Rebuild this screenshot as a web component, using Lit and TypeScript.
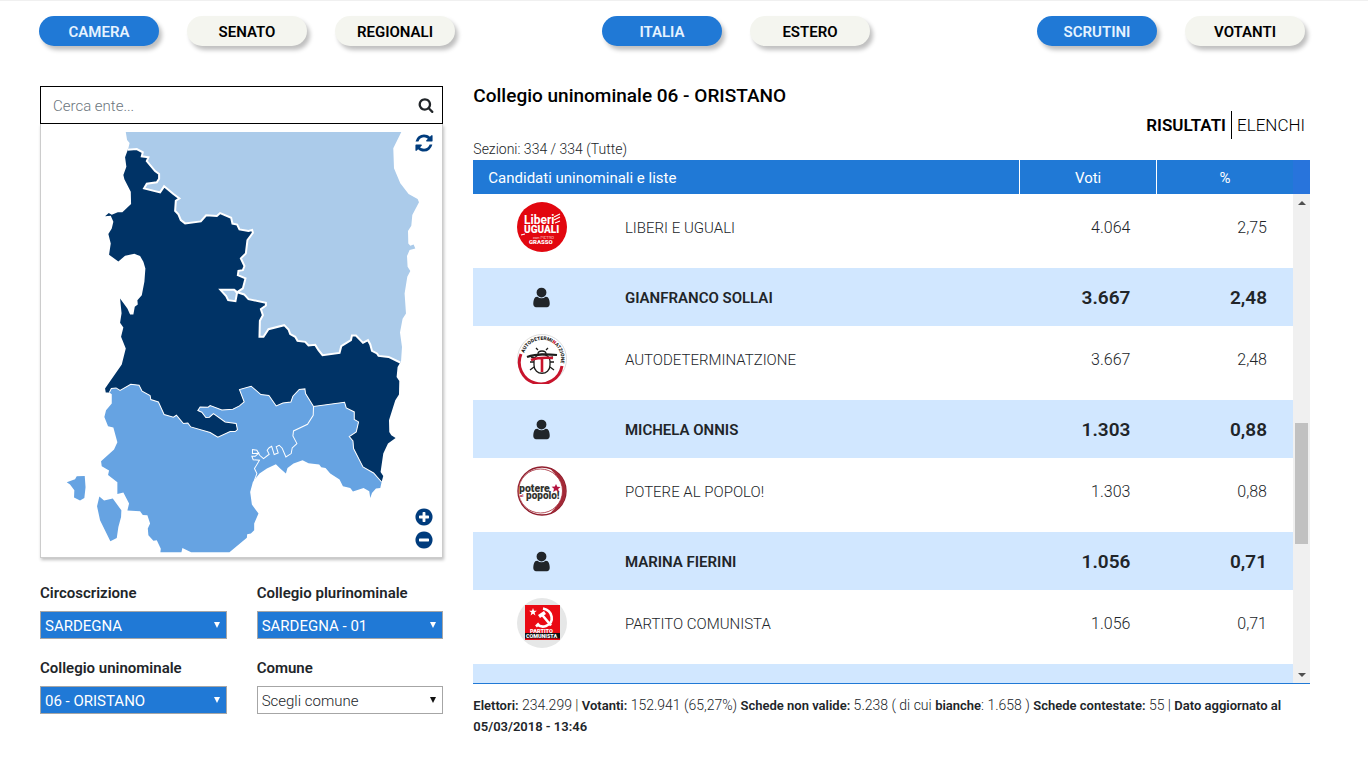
import { LitElement, html, svg, css } from "lit";
import { customElement, property } from "lit/decorators.js";
import { classMap } from "lit/directives/class-map.js";

type Row =
  | { kind: "candidate"; name: string; votes: string; share: string }
  | { kind: "list"; logo: string; name: string; votes: string; share: string }
  | { kind: "spacer" };

const ROWS: Row[] = [
  { kind: "list", logo: "leu", name: "LIBERI E UGUALI", votes: "4.064", share: "2,75" },
  { kind: "candidate", name: "GIANFRANCO SOLLAI", votes: "3.667", share: "2,48" },
  { kind: "list", logo: "auto", name: "AUTODETERMINATZIONE", votes: "3.667", share: "2,48" },
  { kind: "candidate", name: "MICHELA ONNIS", votes: "1.303", share: "0,88" },
  { kind: "list", logo: "pap", name: "POTERE AL POPOLO!", votes: "1.303", share: "0,88" },
  { kind: "candidate", name: "MARINA FIERINI", votes: "1.056", share: "0,71" },
  { kind: "list", logo: "pc", name: "PARTITO COMUNISTA", votes: "1.056", share: "0,71" },
  { kind: "spacer" },
];

const NAV = [
  [{ label: "CAMERA", on: true }, { label: "SENATO", on: false }, { label: "REGIONALI", on: false }],
  [{ label: "ITALIA", on: true }, { label: "ESTERO", on: false }],
  [{ label: "SCRUTINI", on: true }, { label: "VOTANTI", on: false }],
];

const FILTERS = [
  { id: "circ", label: "Circoscrizione", value: "SARDEGNA", on: true },
  { id: "pluri", label: "Collegio plurinominale", value: "SARDEGNA - 01", on: true },
  { id: "uni", label: "Collegio uninominale", value: "06 - ORISTANO", on: true },
  { id: "comune", label: "Comune", value: "Scegli comune", on: false },
];

const ICONS: Record<string, string> = {
  user: "M1536 1399q0 109-62.5 187t-150.5 78h-854q-88 0-150.5-78t-62.5-187q0-85 8.5-160.5t31.5-152 58.5-131 94-89 134.5-34.5q131 128 313 128t313-128q76 0 134.5 34.5t94 89 58.5 131 31.5 152 8.5 160.5zm-256-887q0 159-112.5 271.5t-271.5 112.5-271.5-112.5-112.5-271.5 112.5-271.5 271.5-112.5 271.5 112.5 112.5 271.5z",
  search: "M1216 832q0-185-131.5-316.5t-316.5-131.5-316.5 131.5-131.5 316.5 131.5 316.5 316.5 131.5 316.5-131.5 131.5-316.5zm512 832q0 52-38 90t-90 38q-54 0-90-38l-343-342q-179 124-399 124-143 0-273.5-55.5t-225-150-150-225-55.5-273.5 55.5-273.5 150-225 225-150 273.5-55.5 273.5 55.5 225 150 150 225 55.5 273.5q0 220-124 399l343 343q37 37 37 90z",
  refresh: "M1639 1056q0 5-1 7-64 268-268 434.5t-478 166.5q-146 0-282.5-55t-243.5-157l-129 129q-19 19-45 19t-45-19-19-45v-448q0-26 19-45t45-19h448q26 0 45 19t19 45-19 45l-137 137q71 66 161 102t187 36q134 0 250-65t186-179q11-17 53-117 8-23 30-23h192q13 0 22.5 9.5t9.5 22.5zm25-800v448q0 26-19 45t-45 19h-448q-26 0-45-19t-19-45 19-45l138-138q-148-137-349-137-134 0-250 65t-186 179q-11 17-53 117-8 23-30 23h-199q-13 0-22.5-9.5t-9.5-22.5v-7q65-268 270-434.5t480-166.5q146 0 284 55.5t245 156.5l130-129q19-19 45-19t45 19 19 45z",
  plus: "M1344 960v-128q0-26-19-45t-45-19h-256v-256q0-26-19-45t-45-19h-128q-26 0-45 19t-19 45v256h-256q-26 0-45 19t-19 45v128q0 26 19 45t45 19h256v256q0 26 19 45t45 19h128q26 0 45-19t19-45v-256h256q26 0 45-19t19-45zm320-64q0 209-103 385.5t-279.5 279.5-385.5 103-385.5-103-279.5-279.5-103-385.5 103-385.5 279.5-279.5 385.5-103 385.5 103 279.5 279.5 103 385.5z",
  minus: "M1344 960v-128q0-26-19-45t-45-19h-768q-26 0-45 19t-19 45v128q0 26 19 45t45 19h768q26 0 45-19t19-45zm320-64q0 209-103 385.5t-279.5 279.5-385.5 103-385.5-103-279.5-279.5-103-385.5 103-385.5 279.5-279.5 385.5-103 385.5 103 279.5 279.5 103 385.5z",
};

const icon = (name: string, size: number) => html`
  <svg width=${size} height=${size} viewBox="0 0 1792 1792" fill="currentColor" aria-hidden="true">
    <path d=${ICONS[name]}></path>
  </svg>`;

/* Borders shared between neighbouring districts */
const NORTH_LINE =
  "127.3 149.7 136.7 149 142.7 152.3 141.7 156.3 148.3 157.3 146.7 161 155 171 159 174 159 178.7 156.7 182.3 146.7 183.7 144 188.3 160 192.3 164 186.3 173.3 194 179.3 198.3 175.7 200.7 175 210.7 178.3 214.3 180.7 220 185 223.3 200.7 221.3 206 215.3 216.7 216 220 213 231 217.7 232.3 223.5 237 224.5 239.3 229.3 248.3 231 252 230 252.7 232.7 247.3 240 245.7 253.3 240.7 258.3 244.3 266 242.7 270 238.3 270.7 237.7 275 245.3 278.3 242.7 288.3 237 292 244 294.3 248.3 299 265.7 302.7 265.7 305.3 260.7 309 262.7 315 259.7 320.7 259.3 336.7 263.3 336.7 268.3 329 284 325 288.3 329.3 290 334 295 336.7 297.3 340.7 305 341.7 308.3 345.3 315 344.7 318.3 350 322.3 355 339.3 352.7 341 346 350.7 340 351.7 335.3 355.7 335.3 362.7 342.7 367.7 340 370 344.3 371.7 350.7 376.7 353.3 378.3 355.7 388.3 356.7 400 362.3";
const EAST_COAST =
  "397.3 366.7 396.3 376.7 399 380.7 398.7 394.3 395 400 388.7 420 389 431.7 391 435 395.3 437.7 387.7 443.3 383 453.3 380.3 471.7 383 475.7 381.3 481.7";
const SOUTH_LINE =
  "381.3 481.7 373.3 472.7 362.7 466.7 353.3 448.3 352.7 440.7 349 436.3 356 431.7 358.3 421.7 354 419.3 354 411.7 346 407.7 344.3 402 313.3 406.3 305.3 393.3 304.7 388.7 299 389.3 292.7 396 290.7 401.7 282.7 402.7 276 405.7 268.7 395.3 260.7 394.3 251 386 239.3 389.3 244 401.7 239.3 405.7 232.7 409 221.7 409.7 210 405.3 208 407 200 406.7 197.7 410.3 201.7 412 205.7 417.3 209.3 417 213.3 413.3 225 421.7 236 423.3 237.3 429.3 235 431.3 230 431.3 217.7 437 210 432.3 190.7 426.7 187.7 422.7 183.3 423.3 176.3 415 173.3 417 164 414.3 158.3 401.7 150.7 399.3 150 395.3 142 391 139 385 130.7 384 120 390.3 116 387.7 111.3 388.3 109.3 392.3";
const WEST_COAST =
  "105.7 392.3 105 388.3 121.7 364.3 125.7 348.3 121 336.7 123.3 327.3 120 322.7 121.5 313 120 298.3 127.3 308.3 130 314.3 133.3 314.3 134.7 306.7 137.7 304.3 137.3 300 141.7 295 144.3 281.7 145.3 268.3 143.3 261.7 140 256 134.3 253.7 125 255.7 118.3 261.3 109 254.7 110.7 243.3 108.3 234 111.7 228.3 113.3 221.7 110.7 215.7 105 216.3 108.7 213 111.7 214.7 117.7 212.3 122.3 212.3 131 204 130.7 191.7 124.3 179.3 123.3 175 126.3 166.7 125 157.3 127.3 151";
const NORTH_COAST =
  "400.7 361.7 401.7 346.7 399.7 332.3 402.3 318.5 405.7 313.3 404.3 293.3 407 276.7 410 271 407.3 266.7 406.7 256 409.3 250 415 248.3 413.3 244.3 410 245.7 408 243.3 407.7 231 411 225.7 412 215 418.7 202.3 417.3 199 408.3 194 400 183.3 393.7 168.3 393 148.3 401 132 125.7 132 127 140 129.5 143 128.3 148.3";
const SOUTH_COAST =
  "111.7 394 111.7 403.3 106 410 104.3 416.7 108 426 113.3 427.3 117.3 442 114 449.3 101 461 101.7 466 109 470.3 108 474.7 117.3 482 117.3 493.7 123.3 492.3 129 503.3 127.3 510.3 140 511 142.7 514.7 147.3 515 150 523.3 147.7 528.3 148.3 535 153.3 540.3 156.7 540 160.7 548.3 160.3 552 181.3 552 182.3 547.7 191 552 229.3 552 246.7 537.3 247 534 250.7 533.3 254 530 254 523.3 258.3 513.3 251.7 504.3 250 491.7 252.7 481.7 259.3 473.3 266.7 468.3 275.7 464 280 468.3 285.7 473.3 287.3 467.7 293.3 463.3 302.3 460 308.3 463 319 464.3 321 467 325.3 467.7 330 473.3 339.3 479.3 342.7 486 350 487.7 352.7 491.3 363.3 487.7 369 491 370 497.7 371.7 492.7 375.7 488.3 380 487.7";
const GULF_LINE =
  "313.3 406.3 313 415 307.3 424 293.3 430.7 292.7 435.7 296.7 443.3 292 447.7 291 453.3 285.7 456.7 282 448 279 445 276 446.5 278 452.7 274 454.3 271.5 446 269 447.5 267 450 269 454 263.3 458.3 259.5 455 256.7 450 252.3 449.3 252.3 453.3 258.3 453 255 456 251.7 456 253 459.5 259.3 460 254.3 468.3 256.7 473.3 254 480.7";

const LOGOS: Record<string, unknown> = {
  leu: svg`
    <circle cx="25" cy="25" r="25" fill="#e2070f"></circle>
    <g fill="#fff" font-family="Roboto, sans-serif">
      <text x="7" y="22" font-size="12" font-weight="700">Liberi</text>
      <text x="7" y="31" font-size="10" font-weight="900">UGUALI</text>
      <text x="16" y="37" font-size="4">con PIETRO</text>
      <text x="12" y="42" font-size="6" font-weight="900">GRASSO</text>
    </g>
    <path d="M4 33L8 32M37 15l6-3M37 18l6-3M38 21l5-2" stroke="#fff" stroke-width="1.2"></path>`,
  auto: svg`
    <circle cx="25" cy="25" r="24.5" fill="#fff" stroke="#ddd"></circle>
    <path d="M4 20A21.500 21.500 0 1 0 45 32" fill="none" stroke="#c8142c" stroke-width="3"></path>
    <path id="arc" d="M7 19A19 19 0 1 1 42 33.500" fill="none"></path>
    <text font-family="Roboto, sans-serif" font-size="4.900" font-weight="900" fill="#1d1d1b"><textPath href="#arc">AUTODETERMI<tspan fill="#c8142c">N</tspan>ATZIONE</textPath></text>
    <g fill="none" stroke="#1d1d1b" stroke-width="1.300">
      <path d="M17 27c0-9 16-9 16 0v4c0 11-16 11-16 0zM21 20c0-4 8-4 8 0M21 16l-2-2M29 16l2-2M17 28h-4M33 28h4M17 33l-4 3M33 33l4 3M18 24l-4-1M32 24l4-1"></path>
      <path d="M10 23q10-4 30-2" stroke-width="2.200"></path>
    </g>
    <path d="M14 26q8-3 22-2M25 25v13" stroke="#c8142c" stroke-width="2.600" fill="none"></path>`,
  pap: svg`
    <circle cx="25" cy="25" r="24" fill="#fff" stroke="#8f1d2c" stroke-width="1.400"></circle>
    <path d="M34 3A24 24 0 0 1 34 47A30 30 0 0 0 34 3z" fill="#a32836" stroke="#a32836"></path>
    <circle cx="23.500" cy="25" r="22" fill="#fff" stroke="#a32836" stroke-width=".8"></circle>
    <g fill="#33332f" font-family="Roboto, sans-serif" font-weight="900">
      <text x="2" y="26" font-size="10.500">potere</text>
      <text x="9" y="32.500" font-size="10">popolo!</text>
      <text x="3" y="31" font-size="4" fill="#b3274b">al</text>
    </g>
    <path d="M39 18l1.300 2.800 3.200.2-2.400 2 1 3-3.100-1.700-2.800 1.700.8-3.200-2.400-2 3.200-.2z" fill="#b3123e"></path>`,
  pc: svg`
    <circle cx="25" cy="25" r="25" fill="#e6e7e7"></circle>
    <path d="M8 7h35v35H8z" fill="#ea0a14"></path>
    <path d="M8 35h35v5.500H8z" fill="#111"></path>
    <path d="M16 10l1 2.700 2.900.1-2.300 1.800.8 2.800-2.400-1.600-2.400 1.600.8-2.800-2.300-1.800 2.900-.1z" fill="#fff"></path>
    <path d="M26 10.500c10 2 12 14 3 17.500-4 1.500-7 0-9-2M19 28.500l3-3M24 15.500l10 12" fill="none" stroke="#fff" stroke-width="2.600"></path>
    <path d="M21 17l6-4 2 3-6 4z" fill="#fff"></path>
    <g fill="#fff" font-family="Roboto, sans-serif" font-weight="900">
      <text x="13" y="34.500" font-size="5.600">PARTITO</text>
      <text x="9" y="40" font-size="5.400">COMUNISTA</text>
    </g>`,
};

@customElement("district-map")
class DistrictMap extends LitElement {
  static styles = css`
    :host { display: block; position: relative; border: 1px solid #ccc; border-top: 0; box-shadow: 1px 2px 3px rgba(0, 0, 0, 0.25); }
    .map { display: block; width: 100%; }
    .light { fill: #abcbea; }
    .mid { fill: #66a3e2; }
    .dark { fill: #036; }
    .wide { fill: none; stroke: #fff; stroke-width: 2; }
    .thin { fill: none; stroke: #fff; stroke-width: 1; }
    .tool { position: absolute; right: 8px; width: 20px; height: 20px; padding: 0; border: 0; background: none; color: #003c7d; cursor: pointer; }
    .tool svg { display: block; }
    .reset { top: 9px; }
    .in { bottom: 30px; }
    .out { bottom: 7px; }
  `;
  render() {
    return html`
      <svg class="map" viewBox="41 124 401 433" role="img" aria-label="Mappa dei collegi">
        <polygon class="light" points="${NORTH_LINE} ${NORTH_COAST}"></polygon>
        <polygon class="mid" points="${SOUTH_LINE} ${SOUTH_COAST}"></polygon>
        <polygon class="dark" points="${NORTH_LINE} ${EAST_COAST} ${SOUTH_LINE} ${WEST_COAST}"></polygon>
        <polygon class="mid" points="66.700 482 75 479 76.700 476 84.700 475.700 85.500 487 84.300 497.700 80 500.300 74 497.300 74.300 490 70 484.300"></polygon>
        <polygon class="mid" points="99.300 496.300 104 500.300 112.700 498.300 121.300 510 121 516.700 118.300 526.700 116.700 537.700 110.300 541 100 520 97 506"></polygon>
        <polygon class="light" points="220.300 289.700 234 289.700 237 292 235.300 301 228 300 226 296"></polygon>
        <polygon class="wide" points="220.300 289.700 234 289.700 237 292 235.300 301 228 300 226 296"></polygon>
        <polyline class="wide" points=${NORTH_LINE}></polyline>
        <polyline class="thin" points=${SOUTH_LINE}></polyline>
        <polyline class="thin" points=${GULF_LINE}></polyline>
      </svg>
      <button class="tool reset" aria-label="Ripristina">${icon("refresh", 20)}</button>
      <button class="tool in" aria-label="Ingrandisci">${icon("plus", 20)}</button>
      <button class="tool out" aria-label="Riduci">${icon("minus", 20)}</button>
    `;
  }
}

@customElement("results-table")
class ResultsTable extends LitElement {
  @property({ attribute: false }) rows: Row[] = [];
  static styles = css`
    :host { display: flex; height: 523px; border-bottom: 1px solid #2079d6; color: #212529; }
    .view { flex: 1; overflow: hidden; }
    table { width: 100%; border-collapse: collapse; table-layout: fixed; }
    .c-logo, .c-num { width: calc(100% / 6); }
    th { height: 34px; padding: 2px 0 0; box-sizing: border-box; background: #2079d6; color: #fff; font-size: 15px; font-weight: 400; }
    th + th { border-left: 1px solid #fff; }
    th.first { padding-left: 15px; text-align: left; }
    td { padding: 0 15px; box-sizing: border-box; }
    .list td { height: 74px; padding-bottom: 6px; font-size: 15px; font-weight: 300; }
    .list .logo { padding-bottom: 8px; }
    .candidate td { height: 58px; padding-top: 2px; background: #d1e7ff; font-size: 15px; font-weight: 600; }
    .candidate .logo { padding-top: 0; }
    .logo { text-align: center; }
    .logo svg { display: block; margin: 0 auto; }
    td.num { padding-right: 26px; text-align: right; }
    .list td.num { font-size: 16px; }
    .candidate td.num { font-size: 19px; }
    .bar { display: flex; flex-direction: column; width: 17px; background: #f0f0f0; }
    .stub { height: 34px; background: #2874dc; }
    .arrow { display: grid; place-items: center; height: 17px; padding: 0; border: 0; background: none; color: #505050; }
    .track { flex: 1; display: flex; flex-direction: column; align-items: center; }
    .before { flex: 212; }
    .thumb { flex: 121; width: 13px; background: #c1c1c1; }
    .after { flex: 122; }
  `;
  private row(r: Row) {
    if (r.kind === "spacer") return html`<tr class="candidate"><td colspan="4"></td></tr>`;
    return html`
      <tr class=${r.kind}>
        <td class="logo">${r.kind === "list"
          ? html`<svg width="50" height="50" viewBox="0 0 50 50" aria-hidden="true">${LOGOS[r.logo]}</svg>`
          : icon("user", 23)}</td>
        <td>${r.name}</td>
        <td class="num">${r.votes}</td>
        <td class="num">${r.share}</td>
      </tr>`;
  }
  render() {
    return html`
      <div class="view">
        <table>
          <colgroup><col class="c-logo"><col><col class="c-num"><col class="c-num"></colgroup>
          <thead><tr><th class="first" colspan="2">Candidati uninominali e liste</th><th>Voti</th><th>%</th></tr></thead>
          <tbody>${this.rows.map((r) => this.row(r))}</tbody>
        </table>
      </div>
      <div class="bar">
        <div class="stub"></div>
        <button class="arrow" aria-label="Su"><svg width="8" height="4"><path d="M0 4L4 0l4 4z" fill="currentColor"></path></svg></button>
        <div class="track"><div class="before"></div><div class="thumb"></div><div class="after"></div></div>
        <button class="arrow" aria-label="Giù"><svg width="8" height="4"><path d="M0 0l4 4 4-4z" fill="currentColor"></path></svg></button>
      </div>
    `;
  }
}

@customElement("app-root")
class AppRoot extends LitElement {
  static styles = css`
    :host { display: block; border-top: 1px solid #f0f0f0; background: #fff; color: #212529; font-family: Roboto, "Liberation Sans", sans-serif; font-size: 15px; line-height: 24px; }
    .nav { display: flex; justify-content: space-between; padding: 15px 63px 0 39px; }
    .group { display: flex; gap: 28px; }
    .group:nth-child(2) { padding-right: 20px; }
    .pill { width: 120px; height: 30px; padding: 2px 0 0; border: 0; border-radius: 15px; background: #f4f5ef; color: #000; font: inherit; font-weight: 600; box-shadow: 3px 4px 4px rgba(0, 0, 0, 0.25); cursor: pointer; }
    .pill.on { background: #2079d6; color: #e6f3ff; }
    .main { display: grid; grid-template-columns: repeat(3, minmax(0, 1fr)); gap: 30px; padding: 40px 58px 0 40px; }
    .results { grid-column: span 2; }
    .search { display: flex; align-items: center; height: 38px; box-sizing: border-box; padding: 0 8px 0 12px; border: 1px solid #000; }
    .search input { flex: 1; min-width: 0; padding: 2px 0 0; border: 0; outline: 0; background: none; color: inherit; font: inherit; font-weight: 300; }
    .search input::placeholder { color: #6c757d; opacity: 1; }
    .search button { display: flex; padding: 0; border: 0; background: none; color: #212529; }
    .filters { display: grid; grid-template-columns: 1fr 1fr; gap: 16px 30px; padding-top: 23px; }
    .field { display: flex; flex-direction: column; gap: 6px; }
    .field + .field + .field { margin-top: 1px; }
    .field label { font-weight: 600; }
    .pick { position: relative; display: flex; }
    .pick::after { content: ""; position: absolute; right: 7px; top: 11px; border: 3px solid transparent; border-top: 6px solid #111; border-bottom: 0; pointer-events: none; }
    .pick.on::after { border-top-color: #fff; }
    select { flex: 1; min-width: 0; height: 28px; padding: 2px 20px 0 4px; border: 1px solid #a6a6a6; border-radius: 0; appearance: none; background: #fff; color: #212529; font: inherit; font-weight: 300; }
    .on select { background: #2079d6; color: #fff; font-weight: 400; }
    h1 { margin: 0; color: #000; font-size: 19px; line-height: 20px; font-weight: 500; }
    .tabs { display: flex; justify-content: flex-end; height: 28px; padding: 5px 5px 0 0; }
    .tabs button { padding: 0 5px; border: 0; background: none; color: #000; font: inherit; font-size: 17px; font-weight: 300; }
    .tabs .on { border-right: 1px solid #000; font-weight: 600; }
    .tabs button:last-child { padding-right: 0; }
    .sections { font-size: 14px; line-height: 21px; font-weight: 300; }
    .summary { margin: 11px 0 0; font-size: 14px; line-height: 21px; font-weight: 300; }
    .summary b { font-size: 13px; font-weight: 600; }
  `;
  render() {
    return html`
      <nav class="nav">
        ${NAV.map((g) => html`<div class="group">${g.map((b) => html`<button class=${classMap({ pill: true, on: b.on })}>${b.label}</button>`)}</div>`)}
      </nav>
      <main class="main">
        <section>
          <div class="search">
            <input type="text" aria-label="Cerca ente" placeholder="Cerca ente...">
            <button aria-label="Cerca">${icon("search", 16)}</button>
          </div>
          <district-map></district-map>
          <div class="filters">
            ${FILTERS.map((f) => html`
              <div class="field">
                <label for=${f.id}>${f.label}</label>
                <div class=${classMap({ pick: true, on: f.on })}><select id=${f.id}><option>${f.value}</option></select></div>
              </div>`)}
          </div>
        </section>
        <section class="results">
          <h1>Collegio uninominale 06 - ORISTANO</h1>
          <div class="tabs"><button class="on">RISULTATI</button><button>ELENCHI</button></div>
          <div class="sections">Sezioni: 334 / 334 (Tutte)</div>
          <results-table .rows=${ROWS}></results-table>
          <p class="summary"><b>Elettori:</b> 234.299 | <b>Votanti:</b> 152.941 (65,27%) <b>Schede non valide:</b> 5.238 ( di cui <b>bianche</b>: 1.658 ) <b>Schede contestate:</b> 55 | <b>Dato aggiornato al 05/03/2018 - 13:46</b></p>
        </section>
      </main>
    `;
  }
}
